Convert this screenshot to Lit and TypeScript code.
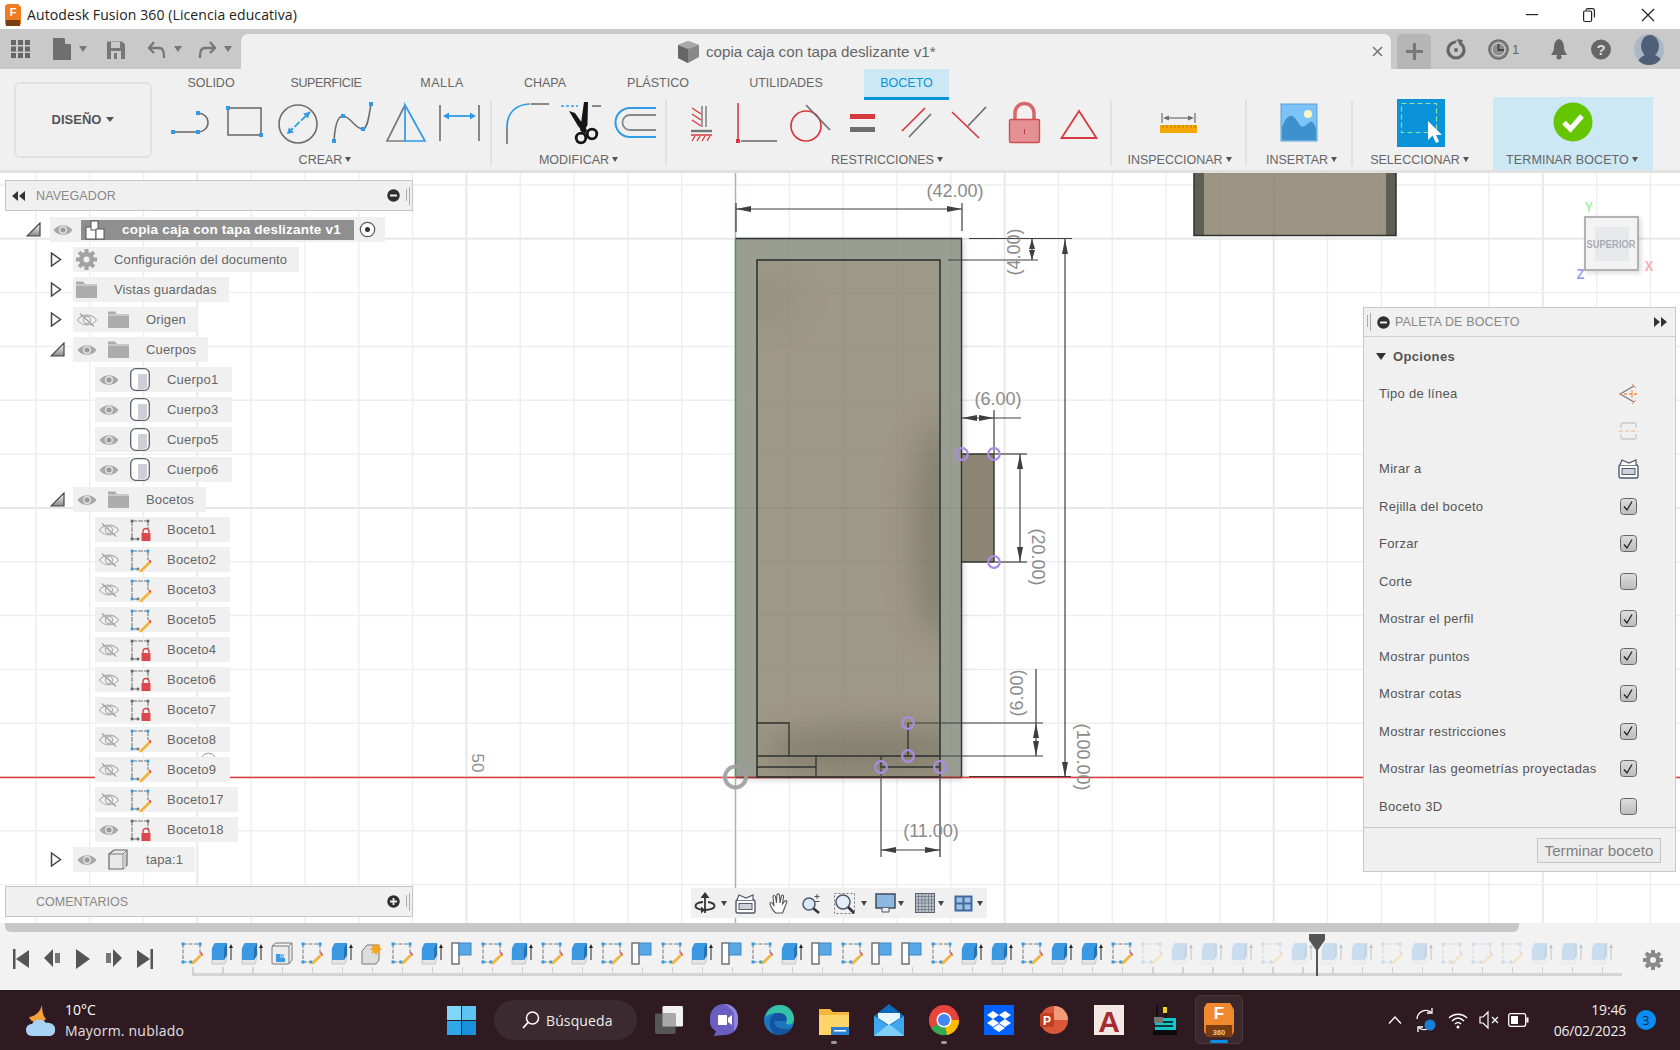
import { LitElement, html, css, svg } from "lit";
import { customElement } from "lit/decorators.js";

const ic = (w: number, h: number, content: unknown, vb?: string) =>
  html`<svg width=${w} height=${h} viewBox=${vb || `0 0 ${w} ${h}`} style="overflow:visible;display:block;flex:none">${content}</svg>`;

const G = "#6e6e6e";
const B = "#2f9be6";
const R = "#d8393f";
const sq = (x: number, y: number, c = B, s = 4) => svg`<rect x=${x - s / 2} y=${y - s / 2} width=${s} height=${s} fill=${c}/>`;

/* ---------- ribbon icons (54x48 cell) ---------- */
const rib: Record<string, unknown> = {
  arc: svg`<path d="M9 32H34" stroke=${G} stroke-width="1.6" fill="none"/><path d="M34 13a10 9.5 0 0 1 0 19" stroke=${G} stroke-width="1.6" fill="none"/>${sq(9, 32)}${sq(34, 32)}${sq(34, 13)}`,
  rect: svg`<rect x="10" y="8" width="33" height="27" stroke=${G} stroke-width="1.6" fill="none"/>${sq(10, 8)}${sq(43, 35)}`,
  circle: svg`<circle cx="26" cy="24" r="19" stroke=${G} stroke-width="1.6" fill="none"/><path d="M16 33L38 12" stroke=${B} stroke-width="1.8" stroke-dasharray="7 2"/><path d="M38 12l-7 1.5 5 5zM15 34l7-1.5-5-5z" fill=${B}/>`,
  spline: svg`<path d="M8 41C9 25 12 16 17 16C24 16 30 30 37 29C42 28 43 15 45 4" stroke=${G} stroke-width="1.6" fill="none"/>${sq(8, 41)}${sq(17, 16)}${sq(37, 29)}${sq(45, 4)}`,
  mirror: svg`<path d="M25 5L7 41H25" stroke="#7c7c7c" stroke-width="1.7" fill="none"/><path d="M25 5L45 41H25Z" stroke=${B} stroke-width="1.7" fill="none"/>`,
  dim: svg`<path d="M6 5V41M45 5V41" stroke=${G} stroke-width="1.6"/><path d="M11 16H40" stroke=${B} stroke-width="1.8"/><path d="M9 16l6-3.5v7zM42 16l-6-3.5v7z" fill=${B}/>`,
  fillet: svg`<path d="M7 44V27" stroke=${G} stroke-width="1.6"/><path d="M7 27C7 13 16 4 30 4" stroke=${B} stroke-width="1.7" fill="none"/><path d="M31 4H49" stroke=${G} stroke-width="1.6"/>`,
  trim: svg`<path d="M7 6H24" stroke=${B} stroke-width="1.6" stroke-dasharray="3 2"/><path d="M38 6H47" stroke=${G} stroke-width="1.6"/><path d="M30 2L34 2L33.500 25L29 33L26 30Z" fill="#151515"/><path d="M15 11L21 13L33 30L31 34L24 26Z" fill="#151515"/><circle cx="27" cy="38" r="4.800" stroke="#151515" stroke-width="2.800" fill="#f0f0f0"/><circle cx="38" cy="34" r="4.800" stroke="#151515" stroke-width="2.800" fill="#f0f0f0"/>`,
  offset: svg`<path d="M48 8H22A14.5 14.5 0 0 0 22 37H48" stroke=${B} stroke-width="2" fill="none"/><path d="M48 15H22A7.5 7.5 0 0 0 22 30H48" stroke="#888" stroke-width="1.8" fill="none"/>`,
  coin: svg`<path d="M28 6V27M32 6V27" stroke=${G} stroke-width="1.3"/><path d="M18 8l9 6M18 14l9 6M18 20l9 6" stroke=${R} stroke-width="1.4"/><path d="M17 31H38" stroke="#777" stroke-width="2.4"/><path d="M17 35H38" stroke=${R} stroke-width="1.5"/><path d="M21 36l-3 5M26 36l-3 5M31 36l-3 5M36 36l-3 5" stroke=${R} stroke-width="1.3"/>`,
  perp: svg`<path d="M10 3V40" stroke=${R} stroke-width="1.6"/><path d="M13 41H49" stroke="#888" stroke-width="2"/>${sq(10, 41, R, 4)}`,
  tan: svg`<circle cx="24" cy="26" r="15" stroke=${R} stroke-width="1.7" fill="none"/><path d="M24 5L48 30" stroke=${G} stroke-width="1.7"/>`,
  eq: svg`<rect x="14" y="14" width="25" height="5" fill=${R}/><rect x="14" y="27" width="25" height="5" fill=${G}/>`,
  par: svg`<path d="M35 8L12 31" stroke=${R} stroke-width="1.7"/><path d="M41 14L19 37" stroke=${G} stroke-width="1.7"/>`,
  per: svg`<path d="M8 12L35 38" stroke=${R} stroke-width="1.7"/><path d="M42 7L24 26" stroke=${G} stroke-width="1.7"/>`,
  lock: svg`<path d="M17 20V13A9.5 9.5 0 0 1 36 13V20" stroke="#d9666a" stroke-width="3.5" fill="none"/><rect x="11.5" y="19.5" width="30" height="23" rx="1.5" fill="#e39193" stroke="#d14d52" stroke-width="1.4"/><path d="M26.5 29v5" stroke="#b83a3f"/>`,
  tri: svg`<path d="M27 11L9.5 38H44.5Z" stroke=${R} stroke-width="1.8" fill="none"/>`,
  ruler: svg`<path d="M10 13V23M43 13V23" stroke=${G} stroke-width="1.2"/><path d="M14 18H39" stroke=${G} stroke-width="1.2"/><path d="M11 18l6-2.5v5zM42 18l-6-2.5v5z" fill=${G}/><rect x="8" y="25" width="37" height="8" fill="#f5a800"/><path d="M11 25v3M15 25v3M19 25v3M23 25v3M27 25v3M31 25v3M35 25v3M39 25v3M43 25v3" stroke="#a86f00" stroke-width=".8"/>`,
  image: svg`<rect x="9" y="4" width="36" height="37" fill="#7cc3f8" stroke="#5a9fd8"/><path d="M10 40V27C16 12 21 13 27 24C31 30 35 24 38 22C41 21 43 25 44 29V40Z" fill="#3f91cd"/><circle cx="36" cy="14" r="4" fill="#fbf6c6"/>`,
  select: svg`<rect x="3" y="-1" width="48" height="48" fill="#0b93d9"/><rect x="7.5" y="3.5" width="35" height="29" stroke="#8fe0a8" stroke-width="1.2" stroke-dasharray="5 3" fill="none"/><path d="M34 21L34 40L38.500 35.500L42 43L45 41.500L42 35L48 35Z" fill="#fff"/>`,
  ok: svg`<circle cx="27" cy="22" r="19.500" fill="#65c600"/><path d="M18 22.500L24.500 29L36 16" stroke="#fff" stroke-width="5" fill="none"/>`,
};

const ribTabs = [
  { t: "SOLIDO", cls: "w94" },
  { t: "SUPERFICIE", cls: "w136 tight" },
  { t: "MALLA", cls: "w96 wide" },
  { t: "CHAPA", cls: "w110" },
  { t: "PLÁSTICO", cls: "w116" },
  { t: "UTILIDADES", cls: "w140" },
];

const groups = [
  { label: "CREAR", cls: "g-crear", icons: ["arc", "rect", "circle", "spline", "mirror", "dim"] },
  { label: "MODIFICAR", cls: "g-mod", icons: ["fillet", "trim", "offset"] },
  { label: "RESTRICCIONES", cls: "g-res", icons: ["coin", "perp", "tan", "eq", "par", "per", "lock", "tri"] },
  { label: "INSPECCIONAR", cls: "g-ins", icons: ["ruler"] },
  { label: "INSERTAR", cls: "g-ims", icons: ["image"] },
  { label: "SELECCIONAR", cls: "g-sel", icons: ["select"] },
  { label: "TERMINAR BOCETO", cls: "g-end", icons: ["ok"] },
];

/* ---------- tree icons ---------- */
const eye = ic(20, 14, svg`<path d="M0.500 7C5 0.500 15 0.500 19.500 7C15 13.500 5 13.500 0.500 7Z" fill="#a8a8a8"/><circle cx="10" cy="7" r="4.200" fill="#dedede"/><circle cx="10" cy="7" r="2.500" fill="#9a9a9a"/>`);
const eyeOff = ic(20, 16, svg`<path d="M0.500 8C5 1.500 15 1.500 19.500 8C15 14.500 5 14.500 0.500 8Z" fill="none" stroke="#b0b0b0" stroke-width="1.2"/><circle cx="10" cy="8" r="3.600" fill="none" stroke="#b0b0b0" stroke-width="1.2"/><path d="M3 1.500L17 14.500" stroke="#a0a0a0" stroke-width="1.300"/>`);
const folder = ic(21, 17, svg`<path d="M0 0.500H7L9 3H21V17H0Z" fill="#acacac"/><path d="M0 4H21" stroke="#e6e6e6"/>`);
const gear = ic(21, 21, svg`<g transform="translate(10.500 10.500)" fill="#a2a2a2"><circle r="7.500"/>${[0, 45, 90, 135, 180, 225, 270, 315].map((a) => svg`<rect x="-2" y="-10.500" width="4" height="5" transform="rotate(${a})"/>`)}<circle r="3" fill="#f0f0f0"/></g>`);
const body = ic(20, 23, svg`<rect x="0.700" y="0.700" width="18.600" height="21.600" rx="5" fill="#fff" stroke="#5c6068" stroke-width="1.300"/><path d="M8 6H17V20L14 21H8Z" fill="#ccd0d6"/>`);
const box = ic(20, 21, svg`<path d="M1 5L6 1H19V16L15 20H1Z" fill="#e9e9e9" stroke="#666" stroke-width="1.200"/><path d="M15 5H1M15 5L19 1M15 5V20" stroke="#777"/><rect x="15" y="5" width="3" height="14" fill="#c8c8c8"/>`);
const comp = ic(20, 20, svg`<rect x="1" y="7" width="10" height="12" fill="#fff" stroke="#555"/><rect x="6" y="1" width="7" height="9" fill="#fff" stroke="#555"/><rect x="11" y="9" width="8" height="10" fill="#fff" stroke="#555"/>`);
const radio = ic(17, 17, svg`<circle cx="8.500" cy="8.500" r="7.200" fill="#fff" stroke="#5a5a5a" stroke-width="1.200"/><circle cx="8.500" cy="8.500" r="2.500" fill="#333"/>`);
const skBase = (c: string) => svg`<path d="M2 2H18M2 2V20M2 20H8M18 2V11" stroke="#777" stroke-width="1.100" stroke-dasharray="5 1"/>${sq(2, 2, c, 2.600)}${sq(18, 2, c, 2.600)}${sq(2, 20, c, 2.600)}${sq(8, 20, c === B ? "#777" : c, 2.600)}`;
const skLock = ic(21, 22, svg`${skBase("#666")}<path d="M13 14V12.500A3 3 0 0 1 19 12.500V14" stroke="#d04b50" stroke-width="1.400" fill="none"/><rect x="11.500" y="14" width="9" height="8" fill="#d8484e"/>`);
const skPen = ic(21, 22, svg`${skBase(B)}<path d="M10 21L19 12L21 14L12 23L9.500 23.500Z" fill="#efb53c"/><path d="M18.500 12L20 10.500L21.500 13L20.500 14Z" fill="#e2454a"/>`);
const triOpen = html`<svg class="ar" width="15" height="15" viewBox="0 0 15 15"><path d="M14 1V14H1Z" fill="url(#tg)" stroke="#444" stroke-width="1.200"/><defs><linearGradient id="tg" x1="0" y1="1" x2="0" y2="0"><stop offset="0" stop-color="#888"/><stop offset="1" stop-color="#fff"/></linearGradient></defs></svg>`;
const triClosed = html`<svg class="ar" width="12" height="15" viewBox="0 0 12 15"><path d="M1.500 1L10.500 7.500L1.500 14Z" fill="#fff" stroke="#444" stroke-width="1.500"/></svg>`;

type Row = { t: string; lvl: 1 | 2; arrow?: "o" | "c"; eye?: "on" | "off" | "none"; icon: unknown };
const rows: Row[] = [
  { t: "Configuración del documento", lvl: 1, arrow: "c", eye: "none", icon: gear },
  { t: "Vistas guardadas", lvl: 1, arrow: "c", eye: "none", icon: folder },
  { t: "Origen", lvl: 1, arrow: "c", eye: "off", icon: folder },
  { t: "Cuerpos", lvl: 1, arrow: "o", eye: "on", icon: folder },
  { t: "Cuerpo1", lvl: 2, eye: "on", icon: body },
  { t: "Cuerpo3", lvl: 2, eye: "on", icon: body },
  { t: "Cuerpo5", lvl: 2, eye: "on", icon: body },
  { t: "Cuerpo6", lvl: 2, eye: "on", icon: body },
  { t: "Bocetos", lvl: 1, arrow: "o", eye: "on", icon: folder },
  { t: "Boceto1", lvl: 2, eye: "off", icon: skLock },
  { t: "Boceto2", lvl: 2, eye: "off", icon: skPen },
  { t: "Boceto3", lvl: 2, eye: "off", icon: skPen },
  { t: "Boceto5", lvl: 2, eye: "off", icon: skPen },
  { t: "Boceto4", lvl: 2, eye: "off", icon: skLock },
  { t: "Boceto6", lvl: 2, eye: "off", icon: skLock },
  { t: "Boceto7", lvl: 2, eye: "off", icon: skLock },
  { t: "Boceto8", lvl: 2, eye: "off", icon: skPen },
  { t: "Boceto9", lvl: 2, eye: "off", icon: skPen },
  { t: "Boceto17", lvl: 2, eye: "off", icon: skPen },
  { t: "Boceto18", lvl: 2, eye: "on", icon: skLock },
  { t: "tapa:1", lvl: 1, arrow: "c", eye: "on", icon: box },
];

/* ---------- timeline ---------- */
const tl: Record<string, unknown> = {
  s: ic(22, 22, svg`<path d="M2 2H19M2 2V20M2 20H10M19 2V11" stroke="#777" stroke-dasharray="4 1.500"/>${sq(2, 2, B, 3)}${sq(19, 2, B, 3)}${sq(2, 20, B, 3)}${sq(10, 20, B, 3)}<path d="M11 20L19 12L21 14L13 22L10.500 22.500Z" fill="#efb53c"/><path d="M19 11L20.500 10L22 13L21 14Z" fill="#e2454a"/>`),
  e: ic(22, 22, svg`<path d="M1 8L3 2H16V16L14 22H1Z" fill="#e4e4e4" stroke="#c6c6c6"/><path d="M1 6L4 1H16V13L13 18H1Z" fill="#3b98e2"/><path d="M13 18V6L16 1V13Z" fill="#2773b3"/><path d="M20 18V4" stroke="#222"/><path d="M18 6l2-4 2 4z" fill="#222"/>`),
  h: ic(22, 22, svg`<rect x="1" y="4" width="17" height="18" rx="1" fill="#ececec" stroke="#777"/><path d="M1 4L5 1H21V18L18 22M18 4L21 1" fill="none" stroke="#777"/><path d="M5 12H11V20H14V20H5Z" fill="#3b98e2"/><rect x="9" y="12" width="4" height="4" fill="#7fbdee"/><rect x="5" y="16" width="9" height="4" fill="#3b98e2"/>`),
  f: ic(22, 22, svg`<path d="M6 3H18V18L15 22H1V9Z" fill="#ddd" stroke="#777"/><path d="M15 1l1.500 3 3-1.500-1 3.500 3 1-3 1.500 1 3-3-1-1.500 3-1.500-3-3 1 1-3-3-1.500 3-1-1-3.500 3 1.500z" fill="#f5a623"/>`),
  p: ic(22, 22, svg`<rect x="1" y="1" width="7" height="21" fill="#fff" stroke="#6a6a6a" stroke-width="1.400"/><rect x="8" y="1" width="12" height="12" fill="#5aa7e6" stroke="#3d88c8"/>`),
};
const tlTypes = "s e e h s e f s e p s e s e s p s e p s e p s p p s e e s e e s s e e e s e e e s e s s s e e e".split(" ");

/* ---------- grid and drawing ---------- */
const ax = 735.5,
  ay = 777;
const xs: number[] = [];
const ys: number[] = [];
for (let i = -14; i <= 18; i++) xs.push(i);
for (let i = -3; i <= 11; i++) ys.push(i);
const grid = (minor: string, major: string) => svg`
  ${xs.map((i) => { const x = ax + i * 53.82; const m = i % 5 === 0; return svg`<line x1=${x} x2=${x} y1="173" y2="923" stroke=${m ? major : minor} stroke-width=${m ? 2 : 1.4}/>`; })}
  ${ys.map((i) => { const y = ay - i * 53.82; const m = i % 5 === 0; return svg`<line y1=${y} y2=${y} x1="0" x2="1680" stroke=${m ? major : minor} stroke-width=${m ? 2 : 1.4}/>`; })}`;
const D = "#3f3f3f";
const arrow = (x: number, y: number, d: "l" | "r" | "u" | "d", len = 15) => {
  const p = d === "l" ? `${x},${y} ${x + len},${y - 3} ${x + len},${y + 3}` : d === "r" ? `${x},${y} ${x - len},${y - 3} ${x - len},${y + 3}` : d === "u" ? `${x},${y} ${x - 3},${y + len} ${x + 3},${y + len}` : `${x},${y} ${x - 3},${y - len} ${x + 3},${y - len}`;
  return svg`<polygon points=${p} fill=${D}/>`;
};
const ln = (x1: number, y1: number, x2: number, y2: number, c = D, w = 1.2) => svg`<line x1=${x1} y1=${y1} x2=${x2} y2=${y2} stroke=${c} stroke-width=${w}/>`;
const dimText = (x: number, y: number, t: string, rot = 0) => svg`<text x=${x} y=${y} transform=${rot ? `rotate(${rot} ${x} ${y})` : ""} text-anchor="middle" dominant-baseline="central" font-family="Liberation Sans" font-size="18" fill="#8b8b8b">${t}</text>`;
const pt = (x: number, y: number) => svg`<circle cx=${x} cy=${y} r="5.800" fill="none" stroke="#ab8be3" stroke-width="2.200"/>`;
const K = "#2e3432";

const drawing = svg`
  <defs>
    <filter id="bl" x="-100%" y="-100%" width="300%" height="300%"><feGaussianBlur stdDeviation="16"/></filter>
    <filter id="sh"><feGaussianBlur stdDeviation="3"/></filter>
    <clipPath id="inner"><rect x="757" y="260" width="183" height="517"/></clipPath>
    <clipPath id="parts"><rect x=${ax} y="238.500" width="259" height="538.500"/><rect x="1194" y="173" width="202" height="62"/></clipPath>
  </defs>
  ${grid("#eeeeee", "#e8e8e8")}
  <rect x="738" y="241" width="226" height="539" fill="#000" opacity=".16" filter="url(#sh)"/>
  <rect x=${ax} y="238.500" width="226" height="538.500" fill="#9a9e92"/>
  <rect x="757" y="260" width="183" height="517" fill="#9e9886"/>
  <g clip-path="url(#inner)">
    <ellipse cx="938" cy="530" rx="24" ry="110" fill="#5c5646" opacity=".36" filter="url(#bl)"/>
    <ellipse cx="870" cy="752" rx="110" ry="26" fill="#5c5646" opacity=".36" filter="url(#bl)"/>
    <ellipse cx="770" cy="300" rx="30" ry="30" fill="#7c7666" opacity=".15" filter="url(#bl)"/>
  </g>
  <rect x="962" y="454" width="32" height="108" fill="#8d8675"/>
  <rect x="1194" y="173" width="202" height="62" fill="#9c9584"/>
  <rect x="1194" y="173" width="10" height="62" fill="#5e5e54"/>
  <rect x="1386" y="173" width="10" height="62" fill="#5e5e54"/>
  <g clip-path="url(#parts)">${grid("rgba(0,0,0,.02)", "rgba(0,0,0,.04)")}</g>
  <path d="M1194 173V235.500H1396V173" fill="none" stroke="#2e3432" stroke-width="1.500"/>
  ${ln(0, 777.5, 1680, 777.5, "#e23c3c", 1.3)}
  ${ln(ax, 173, ax, 923, "#72dc72", 1.2)}
  ${ln(ax, 239, ax, 777, "#4a9a4a", 1.4)}
  ${ln(ax, 777.5, 961.5, 777.5, "#8c3333", 1.4)}
  <path d="M735.500 238.500H961.500V777" fill="none" stroke=${K} stroke-width="1.400"/>
  <rect x="757" y="260" width="183" height="517" fill="none" stroke=${K} stroke-width="1.600"/>
  <path d="M962 454H994V562H962" fill="none" stroke=${K} stroke-width="1.400"/>
  <path d="M757 723H789V756M757 756H940M757 767H816M816 756V777M881 756V767H940M908 723V756" fill="none" stroke=${K} stroke-width="1.300"/>
  ${ln(736, 203, 736, 232)}${ln(962, 203, 962, 231)}${ln(736, 209, 962, 209)}${arrow(736, 209, "l")}${arrow(962, 209, "r")}
  ${dimText(955, 191, "(42.00)")}
  ${ln(969, 238.5, 1072, 238.5)}${ln(948, 260, 1038, 260)}${ln(1032, 239, 1032, 260)}${arrow(1032, 239, "u", 10)}${arrow(1032, 260, "d", 10)}
  ${dimText(1014, 252, "(4.00)", -90)}
  ${ln(1065, 239, 1065, 777)}${arrow(1065, 239, "u")}${arrow(1065, 777, "d")}${ln(969, 776.5, 1071, 776.5)}
  ${dimText(1083, 757, "(100.00)", 90)}
  ${ln(962, 418, 1021, 418)}${ln(994, 410, 994, 454)}${arrow(962, 418, "l")}${arrow(994, 418, "r")}
  ${dimText(998, 399, "(6.00)")}
  ${ln(995, 454, 1027, 454)}${ln(995, 562, 1027, 562)}${ln(1020, 454, 1020, 562)}${arrow(1020, 454, "u")}${arrow(1020, 562, "d")}
  ${dimText(1038, 557, "(20.00)", 90)}
  ${ln(908, 723, 1043, 723)}${ln(908, 756, 1043, 756)}${ln(1036, 669, 1036, 756)}${arrow(1036, 723, "u", 15)}${arrow(1036, 756, "d", 15)}
  ${dimText(1017, 693, "(6.00)", -90)}
  ${ln(881, 756, 881, 857, "#4a4a4a")}${ln(940, 757, 940, 857, "#4a4a4a", 1.4)}${ln(881, 850, 940, 850)}${arrow(881, 850, "l")}${arrow(940, 850, "r")}
  ${dimText(931, 831, "(11.00)")}
  ${pt(908, 723)}${pt(908, 756)}${pt(881, 767)}${pt(940, 767)}${pt(962, 454)}${pt(994, 454)}${pt(994, 562)}
  <circle cx=${ax} cy="777" r="10.500" fill="none" stroke="#9d9d9d" stroke-width="4" opacity=".9"/>
  <text x="477" y="763" transform="rotate(90 477 763)" text-anchor="middle" dominant-baseline="central" font-family="Liberation Sans" font-size="17" fill="#8e8e8e">50</text>
  <path d="M202 757a7 6 0 0 1 13 0" fill="none" stroke="#999" stroke-width="1"/>`;

/* ---------- nav bar ---------- */
const navI = {
  orbit: ic(20, 22, svg`<path d="M10 4V21" stroke="#333" stroke-width="1.800"/><path d="M10 0L5.500 6H14.500Z" fill="#333"/><path d="M8 10C3 10.500 0.500 12 0.500 14C0.500 16.500 5 18 10 18C15 18 19.500 16.500 19.500 14C19.500 12 17 10.500 13 10" fill="none" stroke="#333" stroke-width="1.800"/><path d="M6 14.500L10 18L6 21.500Z" fill="#333"/>`),
  cam: ic(21, 21, svg`<rect x="1" y="7" width="19" height="13" rx="1.500" fill="#fff" stroke="#50596a" stroke-width="1.400"/><rect x="4" y="10.500" width="13" height="6" fill="#ccd3dc" stroke="#50596a"/><path d="M2 7L4 2L11 5L18 2V7" fill="#fff" stroke="#50596a" stroke-width="1.200"/>`),
  hand: ic(20, 21, svg`<path d="M7 20C4 18 2 14 1 11C1 9 3 9 4 11L5 13L4 4C4 2 6 2 6.500 4L7.500 10L8 2C8 .5 10 .5 10.500 2L11 10L12.500 3C13 1.500 15 2 14.500 4L13.500 11L16 8C17.500 7 18.500 8 17.500 10C16 13 15 17 13.500 20Z" fill="#fff" stroke="#555" stroke-width="1.100"/>`),
  zoom: ic(21, 21, svg`<circle cx="8" cy="11" r="6" fill="#dbe9f6" stroke="#4a5a6a" stroke-width="1.500"/><path d="M12.500 15.500L18 20" stroke="#333" stroke-width="2.500"/><path d="M16 1v5M13.500 3.500h5M13.500 8.500h5" stroke="#555"/>`),
  fit: ic(21, 21, svg`<rect x=".5" y=".5" width="20" height="20" fill="none" stroke="#777" stroke-dasharray="2 2"/><circle cx="9" cy="9" r="7" fill="#e3eef8" stroke="#4a5a6a" stroke-width="1.500"/><path d="M14 14L20 20" stroke="#333" stroke-width="2.600"/>`),
  disp: ic(21, 20, svg`<rect x="1" y="1" width="19" height="14" fill="#8eb7e2" stroke="#4a5464" stroke-width="1.600"/><path d="M7 15V19H14V15" fill="#eee" stroke="#4a5464"/>`),
  grid: ic(20, 20, svg`<rect x=".5" y=".5" width="19" height="19" fill="#bfc4cc" stroke="#55606e"/><path d="M3.500 0V20M7 0V20M10 0V20M13.500 0V20M16.500 0V20M0 3.500H20M0 7H20M0 10H20M0 13.500H20M0 16.500H20" stroke="#6b7684" stroke-width=".8"/>`),
  views: ic(19, 17, svg`<rect x=".5" y=".5" width="18" height="16" fill="#42689e"/><rect x="2.500" y="2.500" width="6" height="5" fill="#9cc2e8"/><rect x="10.500" y="2.500" width="6" height="5" fill="#9cc2e8"/><rect x="2.500" y="9.500" width="6" height="5" fill="#9cc2e8"/><rect x="10.500" y="9.500" width="6" height="5" fill="#9cc2e8"/>`),
};

/* ---------- taskbar ---------- */
const fusionIcon = (w: number, h: number) => ic(w, h, svg`<path d="M3 1H26L30 8V30L27 35H4L0 30V6Z" fill="#ee7d22"/><path d="M3 1H26L30 8V23H0V6Z" fill="#f18a2e"/><rect x="2" y="23" width="26" height="12" fill="#7b3c12"/><text x="15" y="17" text-anchor="middle" font-family="Liberation Sans" font-weight="700" font-size="17" fill="#fff">F</text><text x="15" y="32.500" text-anchor="middle" font-family="Liberation Sans" font-weight="700" font-size="7.500" fill="#f0c8a0">360</text>`, "0 0 30 36");
const task: unknown[] = [
  ic(30, 28, svg`<rect x="8" y="0" width="22" height="22" rx="1.500" fill="#f1f1f1"/><rect x="0" y="8" width="22" height="22" rx="1.500" fill="#5a5a5a" opacity=".95"/><rect x="8" y="8" width="14" height="14" fill="#a8a8a8"/>`, "0 0 30 30"),
  ic(28, 32, svg`<path d="M14 0C22 0 28 6 28 14V18C28 26 22 31 15 31L4 32L6 27C2 25 0 22 0 17V14C0 6 6 0 14 0Z" fill="#6a5fc1"/><path d="M14 0C22 0 28 6 28 14V18C28 22 26 25 24 27V10C22 5 18 2 14 0Z" fill="#8f86dd"/><path d="M8 11H17V21H8ZM18 14L22 11V21L18 18Z" fill="#fff"/>`),
  ic(30, 30, svg`<circle cx="15" cy="15" r="15" fill="#1b76bf"/><path d="M1 13C3 4 10 0 16 0C25 0 30 7 30 14C30 20 24 21 22 18C25 14 21 8 14 8C8 8 3 10 1 13Z" fill="#35c1a5"/><path d="M6 16C7 10 11 8 15 8C20 8 24 11 22 16H10C10 21 15 24 21 24C24 24 25 24 27 23C24 28 19 30 15 30C11 30 7 26 6 21Z" fill="#1553a1"/>`),
  ic(30, 30, svg`<path d="M0 4H11L14 7H30V30H0Z" fill="#f6b73c"/><rect x="0" y="10" width="30" height="20" fill="#fcd46a"/><rect x="12" y="22" width="18" height="8" fill="#2a7fd0"/><rect x="15" y="25" width="12" height="1.500" fill="#fff"/>`),
  ic(30, 32, svg`<path d="M15 0L30 12V32H0V12Z" fill="#0f6cbd"/><path d="M0 12L15 22L30 12V32H0Z" fill="#3ea7ee"/><path d="M0 32L15 20L30 32Z" fill="#7fd0f7"/><path d="M4 9H26V14L15 21L4 14Z" fill="#eaf6fe"/>`),
  ic(30, 32, svg`<circle cx="15" cy="16" r="15" fill="#e8453c"/><path d="M15 16L2 23A15 15 0 0 1 4 6Z" fill="#e8453c"/><path d="M15 16L2 24A15 15 0 0 0 21 30Z" fill="#34a853"/><path d="M15 16L30 16A15 15 0 0 1 18 31Z" fill="#fbbc04"/><circle cx="15" cy="16" r="7.500" fill="#fff"/><circle cx="15" cy="16" r="6" fill="#4285f4"/>`),
  ic(30, 30, svg`<rect width="30" height="30" fill="#0061fe"/><path d="M9 6l6 4-6 4-6-4zM21 6l6 4-6 4-6-4zM9 14l6 4-6 4-6-4zM21 14l6 4-6 4-6-4zM15 19l6 4-6 4-6-4z" fill="#fff"/>`),
  ic(30, 28, svg`<circle cx="15" cy="14" r="14" fill="#d9583a"/><path d="M15 0A14 14 0 0 1 29 14H15Z" fill="#f29a7a"/><rect x="1" y="7" width="14" height="14" rx="1.500" fill="#c13f1f"/><text x="8" y="18.500" text-anchor="middle" font-family="Liberation Sans" font-weight="700" font-size="12" fill="#fff">P</text>`),
  ic(30, 30, svg`<rect width="30" height="30" fill="#f4e9e2"/><text x="15" y="27" text-anchor="middle" font-family="Liberation Sans" font-weight="700" font-size="30" fill="#a72b32">A</text>`),
  ic(27, 30, svg`<path d="M6 0V14M15 0V14" stroke="#111" stroke-width="2"/><rect x="12" y="2" width="4" height="6" fill="#f3d020"/><rect x="4" y="13" width="21" height="13" fill="#10c8c8"/><path d="M4 17H22M4 21H22" stroke="#0a0a0a" stroke-width="1.500"/><rect x="3" y="12" width="9" height="6" fill="#777"/><rect x="2" y="25" width="24" height="5" fill="#0a0a0a"/>`),
];
const weather = ic(32, 32, svg`<path d="M16 1C14 8 10 12 3 13C6 20 15 20 20 15C17 12 16 7 16 1Z" fill="#f2a23a"/><path d="M6 32C2 32 0 29 0 26C0 22 3 20 6 20C8 15 17 14 20 19C26 18 30 22 29 27C29 30 26 32 23 32Z" fill="#a9d3f5"/>`);
const sync = ic(24, 26, svg`<path d="M4 12A9 9 0 0 1 18 5M20 14A9 9 0 0 1 6 21" stroke="#fff" stroke-width="1.300" fill="none"/><path d="M19 1V6H14M5 25V20H10" stroke="#fff" stroke-width="1.300" fill="none"/><circle cx="17" cy="18" r="5.500" fill="#1a7fd8"/>`);
const wifi = ic(20, 18, svg`<path d="M1 7C6 2 14 2 19 7M4 10C8 6 12 6 16 10M7 13C9 11 11 11 13 13" stroke="#fff" stroke-width="1.500" fill="none"/><circle cx="10" cy="16" r="1.500" fill="#fff"/>`);
const mute = ic(20, 18, svg`<path d="M1 6H4L9 1V17L4 12H1Z" fill="none" stroke="#fff" stroke-width="1.200"/><path d="M13 6L19 12M19 6L13 12" stroke="#fff" stroke-width="1.300"/>`);
const batt = ic(21, 14, svg`<rect x=".7" y=".7" width="17" height="12.600" rx="2" fill="none" stroke="#fff" stroke-width="1.300"/><rect x="3" y="3" width="7" height="8" fill="#fff"/><rect x="18.500" y="4.500" width="2" height="5" fill="#fff"/>`);

@customElement("app-root")
export class AppRoot extends LitElement {
  static styles = css`
    :host { display: block; width: 1680px; height: 1050px; overflow: hidden; font-family: "Liberation Sans", Arial, sans-serif; color: #666; background: #fff; }
    .app { display: flex; flex-direction: column; width: 1680px; height: 1050px; }

    .title { height: 29px; flex: none; display: flex; align-items: center; background: #fff; padding-left: 5px; }
    .title-text { margin-left: 6px; font: 14px "Open Sans", sans-serif; color: #222; letter-spacing: 0.1px; }
    .win { margin-left: auto; display: flex; }
    .win-b { width: 57px; display: flex; justify-content: center; align-items: center; }
    .win-b:first-child { margin-right: 0; }
    .win-b:last-child { margin-left: 2px; margin-right: 4px; }

    .tabbar { height: 40px; flex: none; background: #c9c9c9; display: flex; align-items: flex-end; }
    .tools { width: 241px; flex: none; height: 40px; display: flex; align-items: center; padding-left: 11px; box-sizing: border-box; }
    .caret { width: 0; height: 0; border: 4px solid transparent; border-top: 6px solid #777; border-bottom: 0; display: inline-block; flex: none; }
    .c-file { margin-left: 23px; } .c-save { margin-left: 20px; } .c-undo { margin-left: 23px; } .c-redo { margin-left: 16px; }
    .tool-caret { margin-left: 8px; margin-right: 0; }
    .tab { width: 1150px; height: 35px; background: #f0f0f0; border-radius: 7px 7px 0 0; display: flex; align-items: center; padding-left: 437px; padding-right: 8px; box-sizing: border-box; }
    .tab-t { margin-left: 7px; font-size: 15.2px; color: #666; }
    .tab-x { margin-left: auto; font-size: 17px; color: #777; }
    .plus { width: 34px; height: 35px; margin-left: 6px; background: #b6b6b6; border-radius: 5px 5px 0 0; display: flex; align-items: center; justify-content: center; flex: none; }
    .rt { height: 40px; display: flex; align-items: center; justify-content: center; width: 30px; flex: none; }
    .r1 { margin-left: 10px; } .r2 { margin-left: 12px; } .r3 { margin-left: 32px; } .r4 { margin-left: 12px; } .r5 { margin-left: 17px; width: 32px; }
    .cnt { font-size: 13px; color: #666; width: 0; margin-left: -1px; align-self: center; }

    .ribbon { height: 101px; flex: none; background: #f0f0f0; border-bottom: 3px solid #e1e1e1; display: flex; }
    .design-w { width: 164px; flex: none; padding: 13px 12px 0 14px; box-sizing: border-box; }
    .design { width: 138px; height: 76px; box-sizing: border-box; border: 2px solid #e1e1e1; border-radius: 6px; display: flex; align-items: center; justify-content: center; font-size: 13px; font-weight: 700; color: #555; gap: 5px; padding-bottom: 2px; }
    .design .caret { border-width: 5px 4px 0; border-top-color: #555; border-top-style: solid; }
    .rib-r { flex: 1; display: flex; flex-direction: column; min-width: 0; }
    .rib-tabs { height: 31px; display: flex; }
    .rib-tab { font-size: 12.5px; line-height: 28px; color: #666; height: 28px; text-align: center; flex: none; }
    .w94 { width: 94px; } .w136 { width: 136px; } .w96 { width: 96px; } .w110 { width: 110px; } .w116 { width: 116px; } .w140 { width: 140px; }
    .tight { letter-spacing: -0.4px; } .wide { letter-spacing: 0.5px; }
    .rib-tab.on { width: 85px; margin-left: 8px; background: #cde8f5; color: #0696d7; border-bottom: 3px solid #0696d7; }
    .rib-g { display: flex; flex: 1; }
    .g { display: flex; flex-direction: column; align-items: center; height: 66px; box-sizing: border-box; border-right: 2px solid #e1e1e1; flex: none; }
    .g-crear { width: 328px; padding-right: 4px; align-items: flex-start; }
    .g-crear .lab { align-self: center; }
    .g-mod { width: 175px; padding-left: 8px; align-items: flex-start; }
    .g-mod .lab { align-self: center; margin-left: -8px; }
    .g-res { width: 445px; padding-left: 7px; align-items: flex-start; }
    .g-res .lab { align-self: center; margin-left: -10px; }
    .g-ins { width: 135px; } .g-ins .lab { margin-left: 2px; } .g-ims { width: 106px; }
    .g-ims .lab { margin-left: 5px; }
    .g-sel { width: 135px; border-right: 0; }
    .g-sel .lab { margin-left: -2px; }
    .g-end { width: 160px; margin-left: 5px; margin-top: -3px; height: 73px; border-right: 0; background: #cde8f5; padding-top: 3px; }
    .g-end .lab { margin-left: -2px; letter-spacing: 0.1px; }
    .cells { display: flex; height: 48px; }
    .cell { width: 54px; height: 48px; flex: none; }
    .lab { height: 22px; line-height: 22px; font-size: 12.5px; color: #666; display: flex; align-items: center; gap: 3px; padding-top: 1px; }
    .lab .caret { border-width: 5px 3.500px 0; border-top-color: #555; margin-top: -2px; }

    .canvas { flex: 1; position: relative; overflow: hidden; background: #fff; min-height: 0; }
    .canvas > svg { position: absolute; left: 0; top: 0; }

    .nav { position: absolute; left: 5px; top: 7px; width: 408px; }
    .bar { height: 31px; box-sizing: border-box; border: 1.500px solid #c6c6c6; background: #f0f0f0; display: flex; align-items: center; padding: 0 1px 0 6px; font-size: 12.5px; color: #888; }
    .bar-t { margin-left: 11px; letter-spacing: 0.1px; }
    .bar-t.c { margin-left: 24px; letter-spacing: 0; }
    .end { margin-left: auto; display: flex; align-items: center; gap: 6px; }
    .tree { display: flex; flex-direction: column; gap: 5px; margin: 6px 0 14px -5px; }
    .row { height: 25px; display: flex; align-items: center; }
    .arw { width: 23px; flex: none; display: flex; align-items: center; }
    .l0 { padding-left: 26px; } .l0 .arw { width: 24px; }
    .l1 { padding-left: 50px; } .l2 { padding-left: 95px; }
    .chip { display: flex; align-items: center; height: 25px; background: #f0f0f0; padding-right: 12px; font-size: 13px; color: #666; letter-spacing: 0.15px; }
    .l2 .chip { padding-right: 14px; letter-spacing: 0.22px; }
    .eye { width: 28px; display: flex; justify-content: center; flex: none; }
    .ico { width: 34px; display: flex; justify-content: center; flex: none; margin-right: 11px; }
    .l2 .ico { margin-right: 10px; }
    .noeye { margin-left: 3px; width: 21px; margin-right: 17px; display: flex; }
    .root { background: #f0f0f0; height: 25px; width: 335px; display: flex; align-items: center; }
    .root .eye { width: 26px; }
    .sel { width: 273px; margin-left: 5px; height: 20px; background: #8f8f8f; display: flex; align-items: center; color: #fff; font-weight: 700; font-size: 13.5px; padding-left: 4px; box-sizing: border-box; white-space: nowrap; letter-spacing: 0.2px; }
    .sel .nm { margin-left: 17px; }
    .radio { margin-left: 5px; }

    .gizmo { position: absolute; left: 691px; top: 715px; width: 296px; height: 30px; background: #f0f0f0; display: flex; align-items: center; }
    .gz { display: flex; flex: none; justify-content: center; }
    .gizmo .caret { border-width: 5px 3.500px 0; border-top-color: #444; }
    .m1 { margin-left: 4px; } .m2 { margin-left: 5.500px; } .m3 { margin-left: 8px; } .m4 { margin-left: 11.500px; } .m4b { margin-left: 13.500px; }
    .m5 { margin-left: 12px; } .m6 { margin-left: 6px; } .m7 { margin-left: 2px; } .m8 { margin-left: 11.500px; } .m9 { margin-left: 2.500px; } .m10 { margin-left: 10px; }

    .cube { position: absolute; left: 1584px; top: 43px; width: 55px; height: 55px; box-sizing: border-box; border: 2px solid #b2b2b2; background: #f3f3f3; box-shadow: 2px 2px 5px rgba(0,0,0,.15); display: flex; align-items: center; justify-content: center; }
    .cube i { position: absolute; left: 9px; top: 9px; width: 34px; height: 34px; background: #e6e8ec; }
    .cube b { position: relative; font-weight: 700; font-size: 11.5px; color: #a8acb2; transform: scaleX(.82); white-space: nowrap; }
    .axl { position: absolute; font-size: 15px; font-weight: 700; transform: scaleX(.85); }
    .ay { left: 1584px; top: 25px; color: #a8f2a8; }
    .az { left: 1576px; top: 92px; color: #9a9af8; }
    .ax { left: 1644px; top: 84px; color: #f8a8a8; }

    .pal { position: absolute; left: 1363px; top: 134px; width: 313px; height: 565px; box-sizing: border-box; background: #f0f0f0; border: 1.500px solid #c8c8c8; display: flex; flex-direction: column; font-size: 13px; color: #555; }
    .pal-h { height: 28px; flex: none; display: flex; align-items: center; border-bottom: 1.500px solid #d0d0d0; font-size: 12.5px; color: #888; padding: 0 8px 0 3px; }
    .pal-h .tt { margin-left: 5px; letter-spacing: 0.15px; }
    .pal-h .ff { margin-left: auto; }
    .pal-h .m { margin-left: 5px; }
    .op { height: 38px; flex: none; display: flex; align-items: center; font-weight: 700; color: #555; padding-left: 12px; gap: 7px; letter-spacing: .35px; }
    .op-t { width: 0; height: 0; border: 5.500px solid transparent; border-top: 7px solid #333; border-bottom: 0; }
    .prow { height: 37.500px; flex: none; display: flex; align-items: center; padding: 0 40px 0 15px; letter-spacing: 0.3px; }
    .pi { margin-left: auto; display: flex; width: 22px; justify-content: center; margin-right: -4px; }
    .chk { width: 17px; height: 17px; box-sizing: border-box; border: 1.500px solid #666; border-radius: 3.500px; background: linear-gradient(#dcdcdc, #bdbdbd); display: flex; align-items: center; justify-content: center; }
    .pal-f { margin-top: 2px; flex: 1; border-top: 1.500px solid #c8c8c8; display: flex; justify-content: flex-end; align-items: flex-start; padding: 10px 14px 0 0; }
    .pbtn { height: 25px; width: 124px; box-sizing: border-box; border: 1.500px solid #c4c4c4; background: #ececec; font-size: 15.2px; color: #808080; display: flex; align-items: center; justify-content: center; }

    .timeline { height: 67px; flex: none; background: #f2f2f2; position: relative; display: flex; flex-direction: column; }
    .scroll { height: 9px; flex: none; margin-left: 5px; width: 1514px; background: #c8c8c8; border-radius: 0 0 6px 6px; }
    .tl-b { display: flex; flex: 1; align-items: flex-start; padding-top: 10px; padding-left: 5.500px; }
    .ctl { display: flex; width: 171.500px; flex: none; padding-top: 7px; }
    .ctl > div { width: 31px; display: flex; justify-content: center; }
    .items { width: 1440px; flex: none; }
    .it-row { display: flex; height: 22px; }
    .it { width: 30px; flex: none; display: flex; justify-content: center; }
    .it.fade { opacity: .22; }
    .ruler { margin: 3px 0 0 15px; width: 1430px; height: 9px; box-sizing: border-box; border-bottom: 3px solid #d4d4d4; background: repeating-linear-gradient(90deg, #cfcfcf 0 1.500px, transparent 1.500px 30px); }
    .gear { margin-left: 26px; padding-top: 8px; }
    .mark { position: absolute; left: 1309px; top: 11px; width: 16px; height: 42px; }

    .taskbar { height: 60px; flex: none; background: #2e1a20; display: flex; align-items: center; color: #fff; padding-right: 24px; }
    .wx { width: 447px; flex: none; padding-left: 26px; box-sizing: border-box; display: flex; align-items: center; gap: 7px; }
    .wx-t { font: 14px/21px "Open Sans", sans-serif; color: #e4e0e1; letter-spacing: 0.22px; white-space: nowrap; }
    .wx-t div:first-child { color: #fff; letter-spacing: 0; }
    .pill { margin-left: 18px; width: 143px; height: 40px; background: #3b2a2f; border-radius: 20px; display: flex; align-items: center; padding-left: 28px; box-sizing: border-box; gap: 6px; font: 14px "Open Sans", sans-serif; letter-spacing: 0.12px; color: #efecec; flex: none; }
    .apps { display: flex; margin-left: 4.500px; flex: none; }
    .app-i { width: 55px; height: 60px; flex: none; display: flex; align-items: center; justify-content: center; position: relative; }
    .dot::after { content: ""; position: absolute; left: 24.500px; bottom: 6px; width: 6px; height: 3px; border-radius: 2px; background: #9a9a9a; }
    .act::before { content: ""; position: absolute; left: 3.500px; top: 5px; width: 48px; height: 49px; box-sizing: border-box; background: #3a282d; border: 1px solid #493a3e; border-radius: 5px; }
    .act::after { content: ""; position: absolute; left: 18.500px; bottom: 7px; width: 18px; height: 3px; border-radius: 2px; background: #0a8de6; }
    .act svg { position: relative; }
    .tray { margin-left: auto; display: flex; align-items: center; }
    .ty { width: 33px; display: flex; justify-content: center; flex: none; }
    .ty:first-child { width: 27px; }
    .ty.n { width: 29.500px; }
    .clock { margin-left: 20.500px; text-align: right; font: 14px/21px "Open Sans", sans-serif; color: #f0eeee; letter-spacing: -0.2px; white-space: nowrap; }
    .badge { margin-left: 10px; width: 20px; height: 20px; border-radius: 50%; background: #0a8cf0; color: #10233a; font: 12px "Open Sans", sans-serif; display: flex; align-items: center; justify-content: center; }
  `;

  private rowT(r: Row) {
    const eyeEl = r.eye === "none" ? html`<div class="noeye">${r.icon}</div>` : html`<div class="eye">${r.eye === "on" ? eye : eyeOff}</div><div class="ico">${r.icon}</div>`;
    return html`<div class="row l${r.lvl}">
      ${r.lvl === 1 ? html`<div class="arw">${r.arrow === "o" ? triOpen : triClosed}</div>` : ""}
      <div class="chip">${eyeEl}<span>${r.t}</span></div>
    </div>`;
  }

  render() {
    const checks: [string, boolean][] = [
      ["Rejilla del boceto", true], ["Forzar", true], ["Corte", false], ["Mostrar el perfil", true], ["Mostrar puntos", true],
      ["Mostrar cotas", true], ["Mostrar restricciones", true], ["Mostrar las geometrías proyectadas", true], ["Boceto 3D", false],
    ];
    const minus = ic(13, 13, svg`<circle cx="6.500" cy="6.500" r="6.200" fill="#2f2f2f"/><rect x="3" y="5.500" width="7" height="2" fill="#eee"/>`);
    const plus = ic(13, 13, svg`<circle cx="6.500" cy="6.500" r="6.200" fill="#2f2f2f"/><path d="M3 6.500H10M6.500 3V10" stroke="#eee" stroke-width="1.800"/>`);
    const handle = ic(5, 20, svg`<path d="M.5 3V15M3.500 1V19" stroke="#aaa" stroke-width="1"/>`);
    return html`<div class="app">
      <div class="title">
        ${ic(16, 22, svg`<path d="M2 0H13L16 3V20L14 22H2L0 20V2Z" fill="#ee7d22"/><rect x="1" y="16" width="14" height="6" fill="#7b3c12"/><text x="8" y="12" text-anchor="middle" font-family="Liberation Sans" font-weight="700" font-size="11" fill="#fff">F</text>`)}
        <span class="title-text">Autodesk Fusion 360 (Licencia educativa)</span>
        <div class="win">
          <div class="win-b">${ic(12, 2, svg`<rect width="12" height="1.200" fill="#222"/>`)}</div>
          <div class="win-b">${ic(12, 14, svg`<rect x=".6" y="3" width="8" height="10.500" rx="1.500" fill="none" stroke="#222" stroke-width="1.200"/><path d="M3 2.500V2C3 1 4 .6 5 .6H9.500C10.500 .6 11.400 1.500 11.400 2.500V9.500" fill="none" stroke="#222" stroke-width="1.200"/>`)}</div>
          <div class="win-b">${ic(14, 14, svg`<path d="M1 1L13 13M13 1L1 13" stroke="#222" stroke-width="1.200"/>`)}</div>
        </div>
      </div>

      <div class="tabbar">
        <div class="tools">
          ${ic(19, 18, svg`${[0, 7, 14].flatMap((x) => [0, 6.5, 13].map((y) => svg`<rect x=${x} y=${y} width="5" height="5" fill="#666"/>`))}`)}
          <div class="c-file">${ic(18, 22, svg`<path d="M0 0H11L18 7V22H0Z" fill="#6f6f6f"/><path d="M12 0L18 6H12Z" fill="#c9c9c9"/>`)}</div>
          <div class="tool-caret caret"></div>
          <div class="c-save">${ic(18, 19, svg`<path d="M0 1.500H15L18 4V19H0Z" fill="#777"/><rect x="4" y="2" width="9" height="6" fill="#c9c9c9"/><rect x="4" y="11" width="10" height="8" fill="#c9c9c9"/><rect x="7" y="13" width="3" height="6" fill="#777"/>`)}</div>
          <div class="c-undo">${ic(18, 18, svg`<path d="M6 2L1 8L6 13" fill="none" stroke="#777" stroke-width="2.300"/><path d="M2 8H11C15 8 16 11 16 18" fill="none" stroke="#777" stroke-width="2.300"/>`)}</div>
          <div class="tool-caret caret"></div>
          <div class="c-redo">${ic(18, 18, svg`<path d="M12 2L17 8L12 13" fill="none" stroke="#777" stroke-width="2.300"/><path d="M16 8H7C3 8 2 11 2 18" fill="none" stroke="#777" stroke-width="2.300"/>`)}</div>
          <div class="tool-caret caret"></div>
        </div>
        <div class="tab">
          ${ic(21, 22, svg`<path d="M10 0L21 4V16L10 22L0 17V4Z" fill="#888"/><path d="M0 4L10 8V22L0 17Z" fill="#666"/><path d="M10 8L21 4L10 0L0 4Z" fill="#a8a8a8"/>`)}
          <span class="tab-t">copia caja con tapa deslizante v1*</span>
          <span class="tab-x">${ic(11, 11, svg`<path d="M1 1L10 10M10 1L1 10" stroke="#777" stroke-width="1.600"/>`)}</span>
        </div>
        <div class="plus">${ic(17, 17, svg`<path d="M8.500 0V17M0 8.500H17" stroke="#777" stroke-width="3.200"/>`)}</div>
        <div class="rt r1">${ic(20, 22, svg`<circle cx="10" cy="12" r="8" fill="none" stroke="#666" stroke-width="3.200"/><path d="M10 4L15 1L14 8L8 10Z" fill="#c9c9c9"/><path d="M11 1L17 2L14 8Z" fill="#666"/><circle cx="10" cy="12" r="2" fill="#666"/>`)}</div>
        <div class="rt r2">${ic(21, 21, svg`<circle cx="10.500" cy="10.500" r="9.500" fill="#8d8d8d" stroke="#666" stroke-width="1.600"/><circle cx="10.500" cy="10.500" r="6.500" fill="none" stroke="#ddd" stroke-width="1"/><path d="M10.500 5V11H16" stroke="#444" stroke-width="1.800" fill="none"/>`)}</div>
        <span class="cnt">1</span>
        <div class="rt r3">${ic(18, 22, svg`<path d="M9 1C5 2 4 6 4 10C4 13 2 15 1 17H17C16 15 14 13 14 10C14 6 13 2 9 1Z" fill="#666"/><circle cx="9" cy="19" r="2.500" fill="#666"/>`)}</div>
        <div class="rt r4">${ic(20, 21, svg`<circle cx="10" cy="10.500" r="10" fill="#666"/><text x="10" y="16" text-anchor="middle" font-family="Liberation Sans" font-weight="700" font-size="15" fill="#dcdcdc">?</text>`)}</div>
        <div class="rt r5">${ic(30, 31, svg`<clipPath id="av"><ellipse cx="15" cy="15.500" rx="15" ry="15.500"/></clipPath><ellipse cx="15" cy="15.500" rx="15" ry="15.500" fill="#a9b7c6"/><g clip-path="url(#av)"><ellipse cx="16" cy="12" rx="9" ry="11" fill="#4f5f78"/><path d="M2 32C4 24 10 20 16 20C22 20 28 24 30 32Z" fill="#4f5f78"/></g>`)}</div>
      </div>

      <div class="ribbon">
        <div class="design-w"><div class="design">DISEÑO <span class="caret"></span></div></div>
        <div class="rib-r">
          <div class="rib-tabs">
            ${ribTabs.map((t) => html`<div class="rib-tab ${t.cls}">${t.t}</div>`)}
            <div class="rib-tab on">BOCETO</div>
          </div>
          <div class="rib-g">
            ${groups.map((g) => html`<div class="g ${g.cls}">
              <div class="cells">${g.icons.map((n) => html`<div class="cell">${ic(54, 48, rib[n])}</div>`)}</div>
              <div class="lab">${g.label}<span class="caret"></span></div>
            </div>`)}
          </div>
        </div>
      </div>

      <div class="canvas">
        <svg width="1680" height="750" viewBox="0 173 1680 750">${drawing}</svg>

        <div class="nav">
          <div class="bar">
            ${ic(13, 10, svg`<path d="M6 0L0 5L6 10ZM13 0L7 5L13 10Z" fill="#333"/>`)}
            <span class="bar-t">NAVEGADOR</span>
            <div class="end">${minus}${handle}</div>
          </div>
          <div class="tree">
            <div class="row l0">
              <div class="arw">${triOpen}</div>
              <div class="root">
                <div class="eye">${eye}</div>
                <div class="sel">${comp}<span class="nm">copia caja con tapa deslizante v1</span></div>
                <div class="radio">${radio}</div>
              </div>
            </div>
            ${rows.map((r) => this.rowT(r))}
          </div>
          <div class="bar">
            <span class="bar-t c">COMENTARIOS</span>
            <div class="end">${plus}${handle}</div>
          </div>
        </div>

        <div class="gizmo">
          <div class="gz m1">${navI.orbit}</div><span class="caret m2"></span>
          <div class="gz m3">${navI.cam}</div>
          <div class="gz m4b">${navI.hand}</div>
          <div class="gz m4">${navI.zoom}</div>
          <div class="gz m5">${navI.fit}</div><span class="caret m6"></span>
          <div class="gz m3">${navI.disp}</div><span class="caret m7"></span>
          <div class="gz m8">${navI.grid}</div><span class="caret m9"></span>
          <div class="gz m10">${navI.views}</div><span class="caret m1"></span>
        </div>

        <div class="cube"><i></i><b>SUPERIOR</b></div>
        <span class="axl ay">Y</span><span class="axl az">Z</span><span class="axl ax">X</span>

        <div class="pal">
          <div class="pal-h">
            ${handle}<span class="m">${minus}</span><span class="tt">PALETA DE BOCETO</span>
            <span class="ff">${ic(13, 10, svg`<path d="M0 0L6 5L0 10ZM7 0L13 5L7 10Z" fill="#333"/>`)}</span>
          </div>
          <div class="op"><span class="op-t"></span>Opciones</div>
          <div class="prow">Tipo de línea<span class="pi">${ic(20, 20, svg`<path d="M2 10L16 2M2 10L16 18" stroke="#777" stroke-width="1.200"/><path d="M1 10H20" stroke="#ee8b4a" stroke-width="1.300" stroke-dasharray="3 2"/><path d="M14 0l4 4M14 20l4-4M14 6v8" stroke="#ee8b4a" stroke-width="1"/>`)}</span></div>
          <div class="prow"><span class="pi">${ic(20, 20, svg`<path d="M5 2H17A2 2 0 0 1 18 4V7M18 13V16A2 2 0 0 1 17 18H5A2 2 0 0 1 3 16V13M3 7V4A2 2 0 0 1 5 2" fill="none" stroke="#c8c8c8" stroke-width="1.300"/><path d="M1 10H20" stroke="#f1b48c" stroke-width="1.200" stroke-dasharray="4 2"/>`)}</span></div>
          <div class="prow">Mirar a<span class="pi">${navI.cam}</span></div>
          ${checks.map(([t, v]) => html`<div class="prow">${t}<span class="pi"><span class="chk">${v ? ic(10, 10, svg`<path d="M1 5.500L4 9L9 .5" fill="none" stroke="#222" stroke-width="1.300"/>`) : ""}</span></span></div>`)}
          <div class="pal-f"><div class="pbtn">Terminar boceto</div></div>
        </div>
      </div>

      <div class="timeline">
        <div class="scroll"></div>
        <div class="tl-b">
          <div class="ctl">
            <div>${ic(16, 20, svg`<rect x="0" y="0" width="2.500" height="20" fill="#555"/><path d="M16 1V19L3 10Z" fill="#555"/>`)}</div>
            <div>${ic(16, 18, svg`<path d="M9 0V18L0 9Z" fill="#555"/><rect x="11" y="4" width="5" height="10" fill="#777"/>`)}</div>
            <div>${ic(14, 20, svg`<path d="M0 0V20L14 10Z" fill="#555"/>`)}</div>
            <div>${ic(16, 18, svg`<path d="M7 0V18L16 9Z" fill="#555"/><rect x="0" y="4" width="5" height="10" fill="#777"/>`)}</div>
            <div>${ic(16, 20, svg`<path d="M0 1V19L13 10Z" fill="#555"/><rect x="13.500" y="0" width="2.500" height="20" fill="#555"/>`)}</div>
          </div>
          <div class="items">
            <div class="it-row">${tlTypes.map((t, i) => html`<div class="it ${i >= 32 ? "fade" : ""}">${tl[t]}</div>`)}</div>
            <div class="ruler"></div>
          </div>
          <div class="gear">${ic(20, 20, svg`<g transform="translate(10 10)" fill="#8a8a8a"><circle r="7.200"/>${[0, 45, 90, 135, 180, 225, 270, 315].map((a) => svg`<rect x="-2" y="-10" width="4" height="5" transform="rotate(${a})"/>`)}<circle r="3" fill="#f2f2f2"/></g>`)}</div>
        </div>
        <div class="mark">${ic(16, 42, svg`<path d="M0 0H16V6L9 16H7L0 6Z" fill="#555"/><rect x="7" y="15" width="2" height="27" fill="#555"/>`)}</div>
      </div>

      <div class="taskbar">
        <div class="wx">${weather}<div class="wx-t"><div>10°C</div><div>Mayorm. nublado</div></div></div>
        ${ic(29, 29, svg`<rect width="14" height="14" fill="#7fd8f8"/><rect x="15" width="14" height="14" fill="#5cc4f2"/><rect y="15" width="14" height="14" fill="#2fa8ea"/><rect x="15" y="15" width="14" height="14" fill="#1a8fdc"/>`)}
        <div class="pill">${ic(18, 18, svg`<circle cx="10.500" cy="7" r="6" fill="none" stroke="#fff" stroke-width="1.500"/><path d="M6 11.500L1 17" stroke="#fff" stroke-width="1.800"/>`)}Búsqueda</div>
        <div class="apps">
          ${task.map((t, i) => html`<div class="app-i ${i === 3 || i === 5 ? "dot" : ""}">${t}</div>`)}
          <div class="app-i act">${fusionIcon(30, 36)}</div>
        </div>
        <div class="tray">
          <div class="ty">${ic(14, 8, svg`<path d="M1 7.500L7 1L13 7.500" stroke="#fff" stroke-width="1.300" fill="none"/>`)}</div>
          <div class="ty">${sync}</div>
          <div class="ty">${wifi}</div>
          <div class="ty n">${mute}</div>
          <div class="ty n">${batt}</div>
          <div class="clock"><div>19:46</div><div>06/02/2023</div></div>
          <div class="badge">3</div>
        </div>
      </div>
    </div>`;
  }
}
